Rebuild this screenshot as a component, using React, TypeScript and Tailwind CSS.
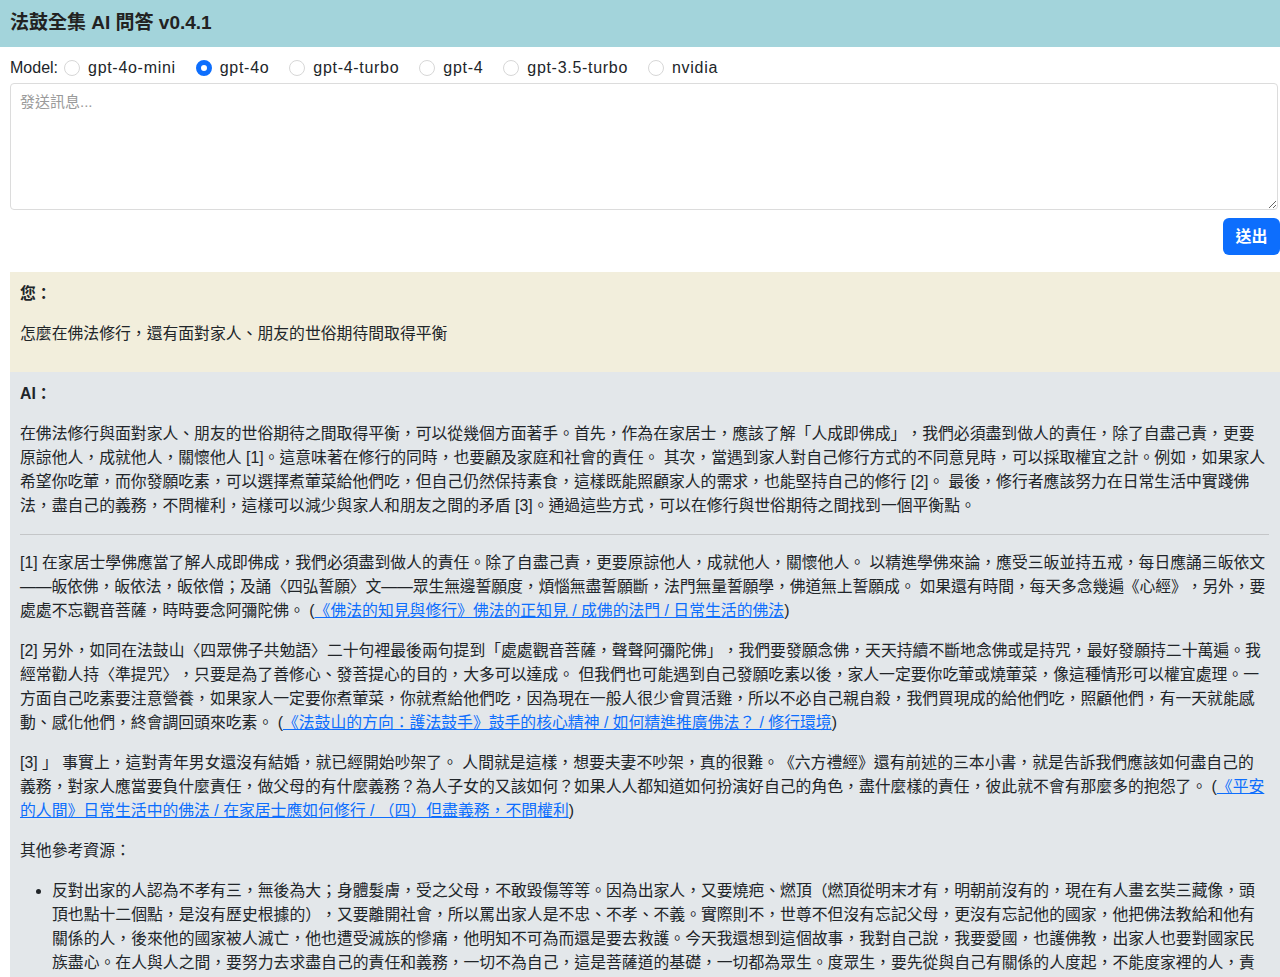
import { useState, type ReactNode } from "react";

const models = ["gpt-4o-mini", "gpt-4o", "gpt-4-turbo", "gpt-4", "gpt-3.5-turbo", "nvidia"];

const font = { fontFamily: '"Liberation Sans", "Noto Sans CJK TC", sans-serif' };

function Ref({ tag, children, title }: { tag: string; children: ReactNode; title: string }) {
  return (
    <p className="my-4">
      {tag} {children} (
      <a href="#" className="text-[#0d6efd] underline">
        {title}
      </a>
      )
    </p>
  );
}

export default function App() {
  const [model, setModel] = useState("gpt-4o");
  const [message, setMessage] = useState("");

  return (
    <div className="h-[977px] overflow-hidden bg-white text-[#212529] [text-spacing-trim:space-all]" style={font}>
      <header className="flex h-[47px] items-center bg-[#a3d4db] px-[10px]">
        <h1 className="text-[19px] font-bold text-[#222]">法鼓全集 AI 問答 v0.4.1</h1>
      </header>

      <div className="pl-[10px]">
        <div className="mt-[9px] flex h-6 items-center text-base">
          <span>Model:</span>
          {models.map((m) => (
            <label key={m} className="mr-[14px] flex items-center">
              <input
                type="radio"
                name="model"
                checked={model === m}
                onChange={() => setModel(m)}
                className="ml-[6px] mr-[8px] h-4 w-4 appearance-none rounded-full border border-[#d7d7d7] bg-white checked:border-[5px] checked:border-[#0d6efd]"
              />
              <span className="tracking-[0.7px]">{m}</span>
            </label>
          ))}
        </div>

        <textarea
          value={message}
          onChange={(event) => setMessage(event.target.value)}
          placeholder="發送訊息..."
          className="mt-[3px] block h-[127px] w-[1268px] rounded border border-[#dcdcdc] px-[9px] py-[6px] text-[15px] leading-6 placeholder:text-[#9a9a9a]"
        />

        <div className="mt-2 flex justify-end">
          <button className="h-[37px] w-[57px] rounded-md bg-[#0d6efd] text-base font-bold text-white">送出</button>
        </div>

        <div className="mt-[17px] bg-[#f2eedc] py-[10px] pl-[10px] pr-[11px] text-[15.84px] leading-6">
          <strong className="block">您：</strong>
          <p className="my-4">怎麼在佛法修行，還有面對家人、朋友的世俗期待間取得平衡</p>
        </div>

        <div className="bg-[#e3e7ea] py-[10px] pl-[10px] pr-[11px] text-[15.84px] leading-6">
          <strong className="block">AI：</strong>
          <p className="my-4">
            在佛法修行與面對家人、朋友的世俗期待之間取得平衡，可以從幾個方面著手。首先，作為在家居士，應該了解「人成即佛成」，我們必須盡到做人的責任，除了自盡己責，更要原諒他人，成就他人，關懷他人 [1]。這意味著在修行的同時，也要顧及家庭和社會的責任。 其次，當遇到家人對自己修行方式的不同意見時，可以採取權宜之計。例如，如果家人希望你吃葷，而你發願吃素，可以選擇煮葷菜給他們吃，但自己仍然保持素食，這樣既能照顧家人的需求，也能堅持自己的修行 [2]。 最後，修行者應該努力在日常生活中實踐佛法，盡自己的義務，不問權利，這樣可以減少與家人和朋友之間的矛盾 [3]。通過這些方式，可以在修行與世俗期待之間找到一個平衡點。
          </p>
          <hr className="border-t border-[#c4c6c8]" />
          <Ref tag="[1]" title="《佛法的知見與修行》佛法的正知見 / 成佛的法門 / 日常生活的佛法">
            在家居士學佛應當了解人成即佛成，我們必須盡到做人的責任。除了自盡己責，更要原諒他人，成就他人，關懷他人。 以精進學佛來論，應受三皈並持五戒，每日應誦三皈依文<wbr />
            <span className="tracking-[-0.12px]">
              ——皈依佛，皈依法，皈依僧；及誦〈四弘誓願〉文<wbr />——眾生無邊誓願度，煩惱無盡誓願斷，法門無量誓願學，佛道無上誓願成。 如果還有時間，每天多念幾遍《心經》，另外，要
            </span>
            處處不忘觀音菩薩，時時要念阿彌陀佛。
          </Ref>
          <Ref tag="[2]" title="《法鼓山的方向：護法鼓手》鼓手的核心精神 / 如何精進推廣佛法？ / 修行環境">
            另外，如同在法鼓山〈四眾佛子共勉語〉二十句裡最後兩句提到「處處觀音菩薩，聲聲阿彌陀佛」，我們要發願念佛，天天持續不斷地念佛或是持咒，最好發願持二十萬遍。我經常勸人持〈準提咒〉，只要是為了善修心、發菩提心的目的，大多可以達成。 但我們也可能遇到自己發願吃素以後，家人一定要你吃葷或燒葷菜，像這種情形可以權宜處理。一方面自己吃素要注意營養，如果家人一定要你煮葷菜，你就煮給他們吃，因為現在一般人很少會買活雞，所以不必自己親自殺，我們買現成的給他們吃，照顧他們，有一天就能感動、感化他們，終會調回頭來吃素。
          </Ref>
          <Ref tag="[3]" title="《平安的人間》日常生活中的佛法 / 在家居士應如何修行 / （四）但盡義務，不問權利">
            」 事實上，這對青年男女還沒有結婚，就已經開始吵架了。 人間就是這樣，想要夫妻不吵架，真的很難。《六方禮經》還有前述的三本小書，就是告訴我們應該如何盡自己的義務，對家人應當要負什麼責任，做父母的有什麼義務？為人子女的又該如何？如果人人都知道如何扮演好自己的角色，盡什麼樣的責任，彼此就不會有那麼多的抱怨了。
          </Ref>
          <p className="my-4">其他參考資源：</p>
          <ul className="list-disc pl-8">
            <li>
              反對出家的人認為不孝有三，無後為大；身體髮膚，受之父母，不敢毀傷等等。因為出家人，又要燒疤、燃頂（燃頂從明末才有，明朝前沒有的，現在有人畫玄奘三藏像，頭頂也點十二個點，是沒有歷史根據的），又要離開社會，所以罵出家人是不忠、不孝、不義。實際則不，世尊不但沒有忘記父母，更沒有忘記他的國家，他把佛法教給和他有關係的人，後來他的國家被人滅亡，他也遭受滅族的慘痛，他明知不可為而還是要去救護。今天我還想到這個故事，我對自己說，我要愛國，也護佛教，出家人也要對國家民族盡心。在人與人之間，要努力去求盡自己的責任和義務，一切不為自己，這是菩薩道的基礎，一切都為眾生。度眾生，要先從與自己有關係的人度起，不能度家裡的人，責任就沒有盡到。
            </li>
          </ul>
        </div>
      </div>
    </div>
  );
}
